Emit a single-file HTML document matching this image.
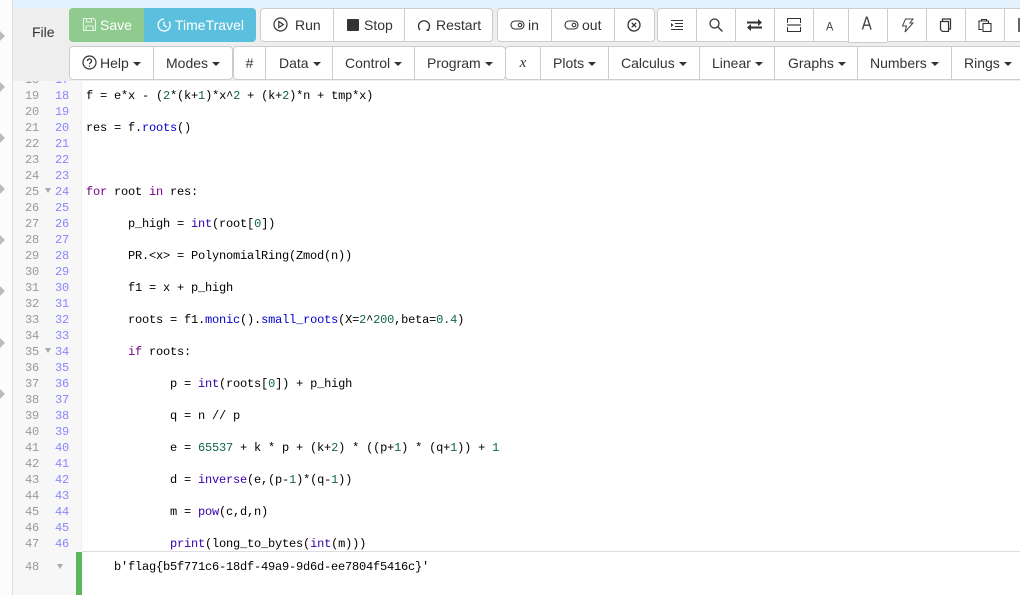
<!DOCTYPE html>
<html><head><meta charset="utf-8">
<style>
html,body{margin:0;padding:0;background:#fff}
#p{position:relative;width:1020px;height:595px;overflow:hidden;background:#fff;font-family:"Liberation Sans",sans-serif;font-size:14px;color:#333}
.a{position:absolute}
.bar{position:absolute;height:31px;background:#fff;border:1px solid #ccc;box-sizing:content-box;border-radius:4px}
.b{position:absolute;top:0;height:31px;line-height:31px;text-align:center;border-left:1px solid #ccc;box-sizing:border-box;white-space:nowrap;color:#333}
.b.f{border-left:0}
.car{display:inline-block;width:0;height:0;border-left:4px solid transparent;border-right:4px solid transparent;border-top:4px solid #333;margin-left:4px;vertical-align:2px}
.ico{position:absolute}
.l{position:absolute;left:86px;height:16px;line-height:16px;font-family:"Liberation Mono",monospace;font-size:12px;letter-spacing:-.2px;white-space:pre;color:#000}
.n{position:absolute;height:16px;line-height:16px;text-align:right;font-family:"Liberation Mono",monospace;font-size:12px;letter-spacing:-.2px;width:24px}
.g{left:15px;color:#999}
.r{left:45px;color:#88f}
.kw{color:#708}.bi{color:#30a}.nu{color:#164}.pr{color:#00c}
.m{position:absolute;left:0;width:0;height:0;border-left:5px solid #bbb;border-top:5px solid transparent;border-bottom:5px solid transparent}
</style></head><body><div id="p">

<div class="a" style="left:0;top:0;width:12px;height:595px;background:#fcfcfc"></div>
<div class="a" style="left:12px;top:0;width:1px;height:595px;background:#ddd"></div>
<div class="m" style="top:31px"></div><div class="m" style="top:82px"></div><div class="m" style="top:133px"></div><div class="m" style="top:184px"></div><div class="m" style="top:235px"></div><div class="m" style="top:286px"></div><div class="m" style="top:338px"></div><div class="m" style="top:389px"></div>

<!-- gutter -->
<div class="a" style="left:13px;top:81px;width:68px;height:514px;background:#f7f7f7"></div>
<div class="a" style="left:81px;top:81px;width:1px;height:470px;background:#eee"></div>

<div id="nums">
<div class="n g" style="top:72px">18</div><div class="n r" style="top:72px">17</div>
<div class="n g" style="top:88px">19</div><div class="n r" style="top:88px">18</div>
<div class="n g" style="top:104px">20</div><div class="n r" style="top:104px">19</div>
<div class="n g" style="top:120px">21</div><div class="n r" style="top:120px">20</div>
<div class="n g" style="top:136px">22</div><div class="n r" style="top:136px">21</div>
<div class="n g" style="top:152px">23</div><div class="n r" style="top:152px">22</div>
<div class="n g" style="top:168px">24</div><div class="n r" style="top:168px">23</div>
<div class="n g" style="top:184px">25</div><div class="n r" style="top:184px">24</div>
<div class="n g" style="top:200px">26</div><div class="n r" style="top:200px">25</div>
<div class="n g" style="top:216px">27</div><div class="n r" style="top:216px">26</div>
<div class="n g" style="top:232px">28</div><div class="n r" style="top:232px">27</div>
<div class="n g" style="top:248px">29</div><div class="n r" style="top:248px">28</div>
<div class="n g" style="top:264px">30</div><div class="n r" style="top:264px">29</div>
<div class="n g" style="top:280px">31</div><div class="n r" style="top:280px">30</div>
<div class="n g" style="top:296px">32</div><div class="n r" style="top:296px">31</div>
<div class="n g" style="top:312px">33</div><div class="n r" style="top:312px">32</div>
<div class="n g" style="top:328px">34</div><div class="n r" style="top:328px">33</div>
<div class="n g" style="top:344px">35</div><div class="n r" style="top:344px">34</div>
<div class="n g" style="top:360px">36</div><div class="n r" style="top:360px">35</div>
<div class="n g" style="top:376px">37</div><div class="n r" style="top:376px">36</div>
<div class="n g" style="top:392px">38</div><div class="n r" style="top:392px">37</div>
<div class="n g" style="top:408px">39</div><div class="n r" style="top:408px">38</div>
<div class="n g" style="top:424px">40</div><div class="n r" style="top:424px">39</div>
<div class="n g" style="top:440px">41</div><div class="n r" style="top:440px">40</div>
<div class="n g" style="top:456px">42</div><div class="n r" style="top:456px">41</div>
<div class="n g" style="top:472px">43</div><div class="n r" style="top:472px">42</div>
<div class="n g" style="top:488px">44</div><div class="n r" style="top:488px">43</div>
<div class="n g" style="top:504px">45</div><div class="n r" style="top:504px">44</div>
<div class="n g" style="top:520px">46</div><div class="n r" style="top:520px">45</div>
<div class="n g" style="top:536px">47</div><div class="n r" style="top:536px">46</div>
<div class="n g" style="top:559px">48</div>
</div>
<div class="a" style="left:45px;top:188px;width:0;height:0;border-left:3px solid transparent;border-right:3px solid transparent;border-top:5px solid #aaa"></div>
<div class="a" style="left:45px;top:348px;width:0;height:0;border-left:3px solid transparent;border-right:3px solid transparent;border-top:5px solid #aaa"></div>
<div class="a" style="left:57px;top:564px;width:0;height:0;border-left:3px solid transparent;border-right:3px solid transparent;border-top:5px solid #aaa"></div>

<!-- code -->
<div class="l" style="top:88px">f = e*x - (<span class="nu">2</span>*(k+<span class="nu">1</span>)*x^<span class="nu">2</span> + (k+<span class="nu">2</span>)*n + tmp*x)</div>
<div class="l" style="top:120px">res = f.<span class="pr">roots</span>()</div>
<div class="l" style="top:184px"><span class="kw">for</span> root <span class="kw">in</span> res:</div>
<div class="l" style="top:216px">      p_high = <span class="bi">int</span>(root[<span class="nu">0</span>])</div>
<div class="l" style="top:248px">      PR.&lt;x&gt; = PolynomialRing(Zmod(n))</div>
<div class="l" style="top:280px">      f1 = x + p_high</div>
<div class="l" style="top:312px">      roots = f1.<span class="pr">monic</span>().<span class="pr">small_roots</span>(X=<span class="nu">2</span>^<span class="nu">200</span>,beta=<span class="nu">0.4</span>)</div>
<div class="l" style="top:344px">      <span class="kw">if</span> roots:</div>
<div class="l" style="top:376px">            p = <span class="bi">int</span>(roots[<span class="nu">0</span>]) + p_high</div>
<div class="l" style="top:408px">            q = n // p</div>
<div class="l" style="top:440px">            e = <span class="nu">65537</span> + k * p + (k+<span class="nu">2</span>) * ((p+<span class="nu">1</span>) * (q+<span class="nu">1</span>)) + <span class="nu">1</span></div>
<div class="l" style="top:472px">            d = <span class="bi">inverse</span>(e,(p-<span class="nu">1</span>)*(q-<span class="nu">1</span>))</div>
<div class="l" style="top:504px">            m = <span class="bi">pow</span>(c,d,n)</div>
<div class="l" style="top:536px">            <span class="bi">print</span>(long_to_bytes(<span class="bi">int</span>(m)))</div>

<!-- output -->
<div class="a" style="left:76px;top:552px;width:6px;height:43px;background:#5cb85c"></div>
<div class="a" style="left:82px;top:551px;width:938px;height:1px;background:#ddd"></div>
<div class="l" style="left:114px;top:559px">b'flag{b5f771c6-18df-49a9-9d6d-ee7804f5416c}'</div>

<!-- toolbar -->
<div class="a" style="left:13px;top:0;width:1007px;height:8px;background:#e3f2fd"></div>
<div class="a" style="left:13px;top:8px;width:1007px;height:73px;background:#eee"></div>
<div class="a" style="left:32px;top:24px;font-size:14px;color:#333;line-height:16px">File</div>

<!-- Save / TimeTravel -->
<div class="a" style="left:69px;top:8px;width:75px;height:34px;background:#8fcb8f;border-radius:4px 0 0 4px"></div>
<div class="a" style="left:144px;top:8px;width:112px;height:34px;background:#5bc0de;border-radius:0 4px 4px 0"></div>
<div class="a" style="left:100px;top:8px;height:34px;line-height:34px;color:#fff;font-size:14px">Save</div>
<div class="a" style="left:175px;top:8px;height:34px;line-height:34px;color:#fff;font-size:14px">TimeTravel</div>
<svg class="ico" style="left:82px;top:17px" width="15" height="15" viewBox="0 0 15 15" fill="none" stroke="#e6f4e6" stroke-width="1.100"><path d="M1.500 1.500h10l2 2v10h-12z"/><path d="M4.500 1.500v3.500h5v-3.500M4 13.500v-4.500h7v4.500"/></svg>
<svg class="ico" style="left:157px;top:18px" width="14" height="14" viewBox="0 0 14 14" fill="none" stroke="#fff" stroke-width="1.300"><path d="M12 3.500A6 6 0 1 1 7 1M7 3.500v4l3 1.500"/></svg>

<!-- Run/Stop/Restart -->
<div class="bar" style="left:260px;top:8px;width:231px;height:32px">
<div class="b f" style="left:0;width:72px;height:32px;line-height:32px;text-align:left;padding-left:34px">Run</div>
<div class="b" style="left:72px;width:71px;height:32px;line-height:32px;text-align:left;padding-left:30px">Stop</div>
<div class="b" style="left:143px;width:88px;height:32px;line-height:32px;text-align:left;padding-left:31px">Restart</div>
</div>
<svg class="ico" style="left:273px;top:17px" width="15" height="15" viewBox="0 0 15 15" fill="none" stroke="#333" stroke-width="1.200"><circle cx="7.500" cy="7.500" r="6.500"/><path d="M5.800 4.500l4.500 3-4.500 3z"/></svg>
<div class="a" style="left:347px;top:19px;width:12px;height:12px;background:#333;border-radius:1px"></div>
<svg class="ico" style="left:417px;top:18px" width="14" height="14" viewBox="0 0 14 14" fill="none" stroke="#333" stroke-width="1.300"><path d="M3 12A5.500 5.500 0 1 1 11 12"/><path d="M9 11.500h3v1.500h-2z" fill="#333" stroke="none"/></svg>

<!-- in/out/x -->
<div class="bar" style="left:497px;top:8px;width:156px;height:32px">
<div class="b f" style="left:0;width:53px;height:32px;line-height:32px;text-align:left;padding-left:30px">in</div>
<div class="b" style="left:53px;width:63px;height:32px;line-height:32px;text-align:left;padding-left:30px">out</div>
<div class="b" style="left:116px;width:40px;height:32px"></div>
</div>
<svg class="ico" style="left:510px;top:20px" width="15" height="10" viewBox="0 0 15 10" fill="none" stroke="#333" stroke-width="1.100"><rect x="1" y="1" width="13" height="8" rx="4"/><circle cx="10" cy="5" r="1.800"/></svg>
<svg class="ico" style="left:564px;top:20px" width="15" height="10" viewBox="0 0 15 10" fill="none" stroke="#333" stroke-width="1.100"><rect x="1" y="1" width="13" height="8" rx="4"/><circle cx="10" cy="5" r="1.800"/></svg>
<svg class="ico" style="left:627px;top:18px" width="14" height="14" viewBox="0 0 14 14" fill="none" stroke="#333" stroke-width="1.300"><circle cx="7" cy="7" r="6"/><path d="M4.800 4.800l4.400 4.400M9.200 4.800l-4.400 4.400"/></svg>

<!-- right icon bar -->
<div class="bar" style="left:657px;top:8px;width:380px;height:32px">
<div class="b f" style="left:0;width:38px;height:32px"></div>
<div class="b" style="left:38px;width:39px;height:32px"></div>
<div class="b" style="left:77px;width:39px;height:32px"></div>
<div class="b" style="left:116px;width:39px;height:32px"></div>
<div class="b" style="left:155px;width:35px;height:32px"></div>
<div class="b" style="left:190px;width:39px;height:34px;border-right:0;border-bottom:1px solid #ccc;background:#fff"></div>
<div class="b" style="left:229px;width:39px;height:32px"></div>
<div class="b" style="left:268px;width:39px;height:32px"></div>
<div class="b" style="left:307px;width:39px;height:32px"></div>
<div class="b" style="left:346px;width:34px;height:32px"></div>
</div>
<svg class="ico" style="left:670px;top:19px" width="14" height="12" viewBox="0 0 14 12" fill="none" stroke="#333" stroke-width="1"><path d="M1 1.500h12M5 4.500h8M5 7.500h8M1 10.500h12"/><path d="M1 4l2.500 2L1 8z" fill="#333" stroke="none"/></svg>
<svg class="ico" style="left:709px;top:18px" width="14" height="14" viewBox="0 0 14 14" fill="none" stroke="#333" stroke-width="1.300"><circle cx="5.500" cy="5.500" r="4.500"/><path d="M9 9l4.500 4.500"/></svg>
<svg class="ico" style="left:747px;top:19px" width="15" height="12" viewBox="0 0 15 12" fill="#333"><rect y="2.500" width="12" height="2"/><rect x="3" y="7.500" width="12" height="2"/><path d="M11 0l4 3.500-4 3.500zM4 5l-4 3.500 4 3.500z"/></svg>
<svg class="ico" style="left:787px;top:18px" width="14" height="14" viewBox="0 0 14 14" fill="none" stroke="#333" stroke-width="1"><path d="M.5 5V.5h13V5M.5 9v4.500h13V9"/><rect y="6" width="14" height="2" fill="#888" stroke="none"/></svg>
<div class="a" style="left:826px;top:19px;font-size:11px;line-height:16px;color:#444;transform:scaleY(1.100)">A</div>
<div class="a" style="left:861px;top:14px;font-size:17px;line-height:20px;color:#444;transform:scaleX(.9) scaleY(1.100)">A</div>
<svg class="ico" style="left:901px;top:18px" width="13" height="15" viewBox="0 0 13 15" fill="none" stroke="#444" stroke-width="1"><path d="M4.500 1h7.500L9 5h3L4 14l1.500-6H1.500z"/></svg>
<svg class="ico" style="left:939px;top:18px" width="13" height="14" viewBox="0 0 13 14" fill="none" stroke="#333" stroke-width="1.200"><path d="M1.500 3.500h8v10h-6l-2-2zM3.500 3V1h8v10h-2"/></svg>
<svg class="ico" style="left:978px;top:18px" width="14" height="14" viewBox="0 0 14 14" fill="none" stroke="#333" stroke-width="1.100"><path d="M4 3H1v8.500h3M9 3h1.500v2M3.500 3V1.500h5V3z"/><rect x="5" y="5.500" width="8" height="8"/></svg>
<div class="a" style="left:1018px;top:18px;width:2px;height:14px;background:#666"></div>

<!-- second row -->
<div class="bar" style="left:69px;top:46px;width:162px;height:32px">
<div class="b f" style="left:0;width:83px;height:32px;line-height:32px;text-align:left;padding-left:30px">Help<span class="car"></span></div>
<div class="b" style="left:83px;width:79px;height:32px;line-height:32px;text-align:left;padding-left:12px">Modes<span class="car"></span></div>
</div>
<svg class="ico" style="left:82px;top:55px" width="15" height="15" viewBox="0 0 15 15" fill="none" stroke="#333" stroke-width="1.200"><circle cx="7.500" cy="7.500" r="6.500"/><path d="M5.500 6a2 2 0 1 1 3 1.700c-.7.400-1 .8-1 1.500"/><path d="M7.500 10.500v1.200"/></svg>
<div class="bar" style="left:233px;top:46px;width:271px;height:32px">
<div class="b f" style="left:0;width:31px;height:32px;line-height:32px">#</div>
<div class="b" style="left:31px;width:67px;height:32px;line-height:32px;text-align:left;padding-left:13px">Data<span class="car"></span></div>
<div class="b" style="left:98px;width:82px;height:32px;line-height:32px;text-align:left;padding-left:12px">Control<span class="car"></span></div>
<div class="b" style="left:180px;width:91px;height:32px;line-height:32px;text-align:left;padding-left:12px">Program<span class="car"></span></div>
</div>
<div class="bar" style="left:505px;top:46px;width:530px;height:32px">
<div class="b f" style="left:0;width:34px;height:32px;line-height:32px;font-family:'Liberation Serif',serif;font-style:italic;font-size:15px">x</div>
<div class="b" style="left:34px;width:68px;height:32px;line-height:32px;text-align:left;padding-left:12px">Plots<span class="car"></span></div>
<div class="b" style="left:102px;width:91px;height:32px;line-height:32px;text-align:left;padding-left:12px">Calculus<span class="car"></span></div>
<div class="b" style="left:193px;width:75px;height:32px;line-height:32px;text-align:left;padding-left:12px">Linear<span class="car"></span></div>
<div class="b" style="left:268px;width:83px;height:32px;line-height:32px;text-align:left;padding-left:13px">Graphs<span class="car"></span></div>
<div class="b" style="left:351px;width:94px;height:32px;line-height:32px;text-align:left;padding-left:12px">Numbers<span class="car"></span></div>
<div class="b" style="left:445px;width:85px;height:32px;line-height:32px;text-align:left;padding-left:12px">Rings<span class="car"></span></div>
</div>

</div></body></html>
